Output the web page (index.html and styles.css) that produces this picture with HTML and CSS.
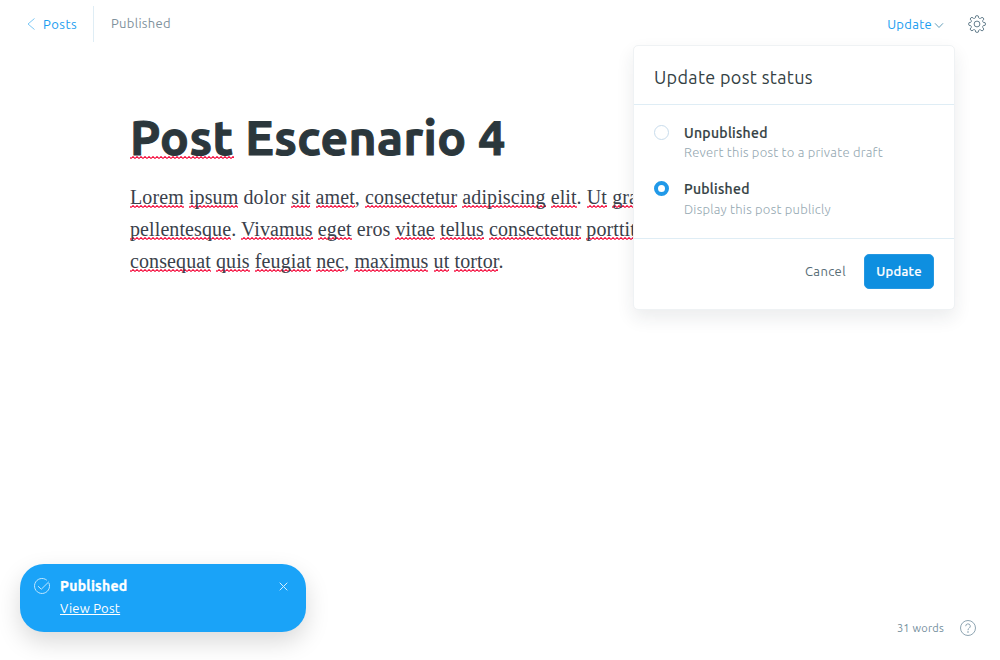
FILE: index.html
```html
<!DOCTYPE html>
<html lang="en">
<head>
<meta charset="utf-8">
<title>Post Escenario 4</title>
<link rel="stylesheet" href="styles.css">
</head>
<body>
<div class="editor">
  <header class="topbar">
    <a class="back"><svg class="back-icon" width="8" height="14" viewBox="0 0 8 14"><path d="M7.500 1.500 1 7l6.500 5.500"/></svg><span>Posts</span></a>
    <span class="post-state">Published</span>
    <div class="actions">
      <div class="update-menu">
        <a class="update-trigger"><span>Update</span><svg class="caret" width="8" height="5" viewBox="0 0 8 5"><path d="M0 .3 4 4.500 8 .3"/></svg></a>
        <section class="popover">
          <h2 class="popover-title"><span>Update post status</span></h2>
          <div class="options">
            <div class="option">
              <i class="radio"></i>
              <div><div class="option-name">Unpublished</div><div class="option-help raised">Revert this post to a private draft</div></div>
            </div>
            <div class="option">
              <i class="radio checked"></i>
              <div><div class="option-name">Published</div><div class="option-help">Display this post publicly</div></div>
            </div>
          </div>
          <footer class="popover-footer"><a class="cancel">Cancel</a><button class="submit">Update</button></footer>
        </section>
      </div>
      <svg class="gear" width="18" height="18" viewBox="0 0 18 18"><circle cx="9" cy="9" r="2.900"/><path d="M7.300 2.900 7.700 1Q9 .2 10.300 1l.4 1.900q.7.900 1.700.5l1.600-1q1.500.2 1.900 1.700l-1.200 1.500q-.3 1.200.5 1.700l1.900.4q.8 1.300 0 2.600l-1.900.4q-.9.700-.5 1.700l1.100 1.600q-.3 1.500-1.800 1.900l-1.600-1.100q-1.100-.3-1.700.5l-.4 1.800Q9 17.800 7.700 17l-.4-1.800q-.7-.9-1.700-.5L4 15.800q-1.500-.3-1.900-1.800l1.200-1.600q.3-1.200-.5-1.700L1 10.300Q.2 9 1 7.700l1.800-.4q.9-.7.500-1.700L2.200 4.100Q2.500 2.600 4 2.300l1.600 1.100q1.100.3 1.700-.5Z"/></svg>
    </div>
  </header>
  <main class="article">
    <h1 class="title"><span class="sp">Post</span> Escenario 4</h1>
    <p class="body-text"><span class="sp">Lorem</span> <span class="sp">ipsum</span> dolor <span class="sp">sit</span> <span class="sp">amet</span>, <span class="sp">consectetur</span> <span class="sp">adipiscing</span> <span class="sp">elit</span>. <span class="sp">Ut</span> <span class="sp">gravida</span><br>
    <span class="sp">pellentesque</span>. <span class="sp">Vivamus</span> <span class="sp">eget</span> eros <span class="sp">vitae</span> <span class="sp">tellus</span> <span class="sp">consectetur</span> <span class="sp">porttitor</span><br>
    <span class="sp">consequat</span> <span class="sp">quis</span> <span class="sp">feugiat</span> <span class="sp">nec</span>, <span class="sp">maximus</span> <span class="sp">ut</span> <span class="sp">tortor</span>.</p>
  </main>
  <footer class="bottom">
    <aside class="toast">
      <svg class="check" width="16" height="16" viewBox="0 0 16 16"><path d="M14.900 5A7.500 7.500 0 1 1 12.800 2.200"/><path d="m4 8.200 3.300 3L14.800 3.800"/></svg>
      <div class="toast-copy"><div class="toast-title">Published</div><a class="toast-link">View Post</a></div>
      <svg class="close" width="9" height="9" viewBox="0 0 9 9"><path d="m.7.7 7.600 7.600m0-7.600L.7 8.300"/></svg>
    </aside>
    <div class="status"><span class="words">31 words</span>
      <svg class="help" width="16" height="16" viewBox="0 0 16 16"><circle cx="8" cy="8" r="7.500"/><path d="M5.700 6.200a2.300 2.300 0 1 1 3.400 2Q8 8.800 8 10.200"/><circle cx="8" cy="12" r=".4"/></svg>
    </div>
  </footer>
</div>
</body>
</html>
```
FILE: styles.css
```css
* { box-sizing: border-box; }
body { margin: 0; background: #fff; color: #343f44; font: 13px/20px Ubuntu, "Noto Sans", sans-serif; letter-spacing: .23px; }
svg { flex: none; fill: none; overflow: visible; }
.editor { height: 660px; display: flex; flex-direction: column; overflow: hidden; }
.topbar { display: flex; height: 48px; padding: 6px 14px 6px 27px; flex: none; }
.back { display: flex; align-items: center; gap: 8px; width: 67px; height: 36px; border-right: 1px solid #dfedf5; color: #1a9df0; letter-spacing: .5px; }
.back-icon { stroke: #7cc8f6; }
.post-state { margin: 7px 0 0 17px; color: #7f929d; letter-spacing: .3px; }
.actions { margin-left: auto; display: flex; align-items: center; gap: 25px; }
.update-menu { position: relative; }
.update-trigger { display: flex; align-items: center; gap: 3px; color: #1a9df0; letter-spacing: .3px; }
.caret { stroke: #659fb9; margin-top: 2px; }
.gear { stroke: #667f8e; stroke-width: 1; stroke-linejoin: round; }
.popover { position: absolute; z-index: 2; top: 31px; right: -12px; width: 322px; height: 265px; background: #fff; border: 1px solid #eff2f4; border-radius: 5px; box-shadow: 0 8px 18px rgba(30,45,50,.09); letter-spacing: .23px; }
.popover-title { height: 59px; margin: 0; padding: 18px 20px 0; border-bottom: 1px solid #dfedf5; font-size: 18px; line-height: 26px; font-weight: 400; letter-spacing: .33px; }
.options { height: 134px; padding: 18px 20px 0; border-bottom: 1px solid #dfedf5; display: flex; flex-direction: column; gap: 16px; }
.option { display: flex; gap: 15px; height: 40px; }
.radio { width: 15px; height: 15px; margin-top: 2px; border: 1px solid #c8dcec; border-radius: 50%; }
.radio.checked { border: 4px solid #2199e8; }
.option-name { font-size: 14px; font-weight: 500; line-height: 20px; letter-spacing: .3px; -webkit-text-stroke: .2px; }
.option-help { color: #94a7b1; font-weight: 300; line-height: 20px; white-space: nowrap; }
.option-help.raised { margin-top: -1px; }
.popover-footer { display: flex; justify-content: flex-end; align-items: center; gap: 18px; padding: 15px 20px; }
.cancel { color: #566c75; padding-bottom: 2px; letter-spacing: .4px; }
.submit { width: 70px; height: 35px; padding: 0 0 2px; border: 1px solid #2598e2; border-radius: 5px; background: #0e8fe0; color: #fff; font: 500 13px/20px Ubuntu, "Noto Sans", sans-serif; letter-spacing: .3px; -webkit-text-stroke: .2px; }
.article { flex: 1; padding: 59px 130px 0; }
.title { margin: 0; color: #2b373c; font-size: 48px; line-height: 60px; font-weight: 700; white-space: nowrap; letter-spacing: .4px; -webkit-text-stroke: 1px; }
.body-text { margin: 14px 0 0; color: #3a414b; font: 20px/32px "Liberation Serif", serif; letter-spacing: .1px; white-space: nowrap; }
.sp { background: url("data:image/svg+xml,%3Csvg xmlns='http://www.w3.org/2000/svg' width='4' height='3'%3E%3Cpath d='M-1 0 1 2 3 0 5 2' transform='translate(0 .5)' fill='none' stroke='%23f51040' stroke-width='1.05'/%3E%3C/svg%3E") 0 100% repeat-x; }
.title .sp { background-position: 0 46px; }
.bottom { display: flex; justify-content: space-between; padding: 0 24px 28px 20px; }
.toast { display: flex; width: 286px; height: 68px; padding: 14px 18px 0 14px; border-radius: 24px; background: #1aa3f8; color: #fff; box-shadow: 0 10px 24px rgba(0,0,0,.15); }
.check { stroke: #c0e7ff; }
.toast-copy { margin-left: 10px; flex: 1; line-height: 22px; margin-top: -3px; }
.toast-title { font-size: 14px; font-weight: 700; letter-spacing: .3px; -webkit-text-stroke: .35px; }
.toast-link { text-decoration: underline; }
.close { stroke: #d4efff; margin-top: 3.5px; }
.status { align-self: flex-end; display: flex; align-items: center; gap: 16px; margin-bottom: -6px; color: #748e9c; font-size: 11px; }
.help { stroke: #829ba9; stroke-width: .9; }
```
